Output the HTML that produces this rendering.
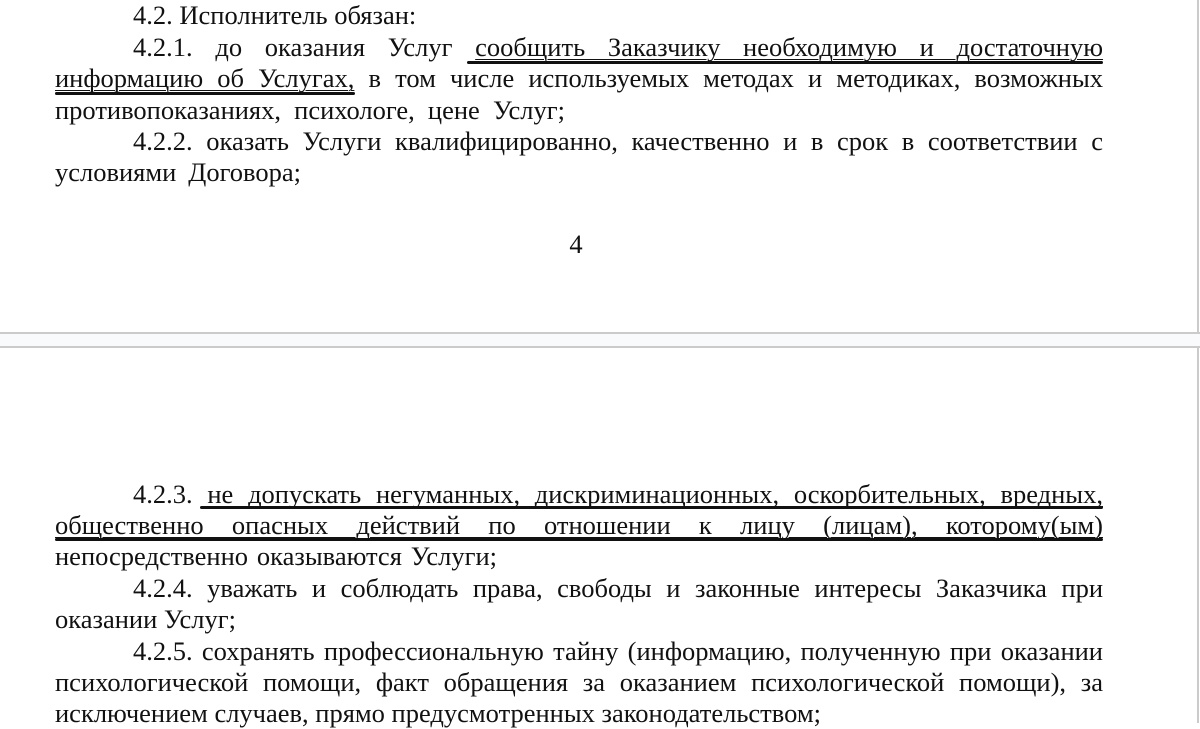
<!DOCTYPE html>
<html><head><meta charset="utf-8"><style>
html,body{margin:0;padding:0;}
body{width:1200px;height:723px;background:#fff;position:relative;overflow:hidden;font-family:"Liberation Serif","Noto Serif CJK SC",serif;color:#111;}
.gap{position:absolute;left:0;top:332px;width:1200px;height:16px;background:#f9fafb;border-top:2px solid #cbcbcb;border-bottom:2px solid #cbcbcb;box-sizing:border-box;}
.rb{position:absolute;right:1px;width:2px;background:#cbcbcb;}
.l{position:absolute;left:55px;width:1048px;height:32px;line-height:32px;font-size:26.5px;white-space:nowrap;text-align:justify;text-align-last:justify;}
.i{padding-left:78px;box-sizing:border-box;}
.u{text-decoration:underline;text-decoration-thickness:1px;text-underline-offset:3px;}
.t{position:absolute;height:3px;background:#111;border-radius:2px;}
</style></head><body>
<div class="rb" style="top:0;height:334px"></div>
<div class="rb" style="top:346px;height:377px"></div>
<div class="gap"></div>

<div class="l i" style="top:-1px;width:270px">4.2. Исполнитель обязан:</div>
<div class="l i" style="top:31px">4.2.1. до оказания Услуг <span class="u">сообщить Заказчику необходимую и достаточную</span></div>
<div class="l" style="top:62px"><span class="u">информацию об Услугах,</span> в том числе используемых методах и методиках, возможных</div>
<div class="l" style="top:94px;width:510px">противопоказаниях, психологе, цене Услуг;</div>
<div class="l i" style="top:125px">4.2.2. оказать Услуги квалифицированно, качественно и в срок в соответствии с</div>
<div class="l" style="top:156px;width:246px">условиями Договора;</div>
<div class="l" style="top:228px;left:0;width:1152px;text-align:center;text-align-last:center">4</div>
<div class="t" style="left:467px;top:61px;width:636px"></div>
<div class="t" style="left:55px;top:92px;width:300px"></div>

<div class="l i" style="top:478px">4.2.3. <span class="u">не допускать негуманных, дискриминационных, оскорбительных, вредных,</span></div>
<div class="l" style="top:509px"><span class="u">общественно опасных действий по отношении к лицу (лицам), которому(ым)</span></div>
<div class="l" style="top:540px;width:442px">непосредственно оказываются Услуги;</div>
<div class="l i" style="top:572px">4.2.4. уважать и соблюдать права, свободы и законные интересы Заказчика при</div>
<div class="l" style="top:603px;width:168px">оказании Услуг;</div>
<div class="l i" style="top:635px">4.2.5. сохранять профессиональную тайну (информацию, полученную при оказании</div>
<div class="l" style="top:666px">психологической помощи, факт обращения за оказанием психологической помощи), за</div>
<div class="l" style="top:697px;width:745px">исключением случаев, прямо предусмотренных законодательством;</div>
<div class="t" style="left:200px;top:506px;width:903px"></div>
<div class="t" style="left:55px;top:538px;width:1048px"></div>
</body></html>
